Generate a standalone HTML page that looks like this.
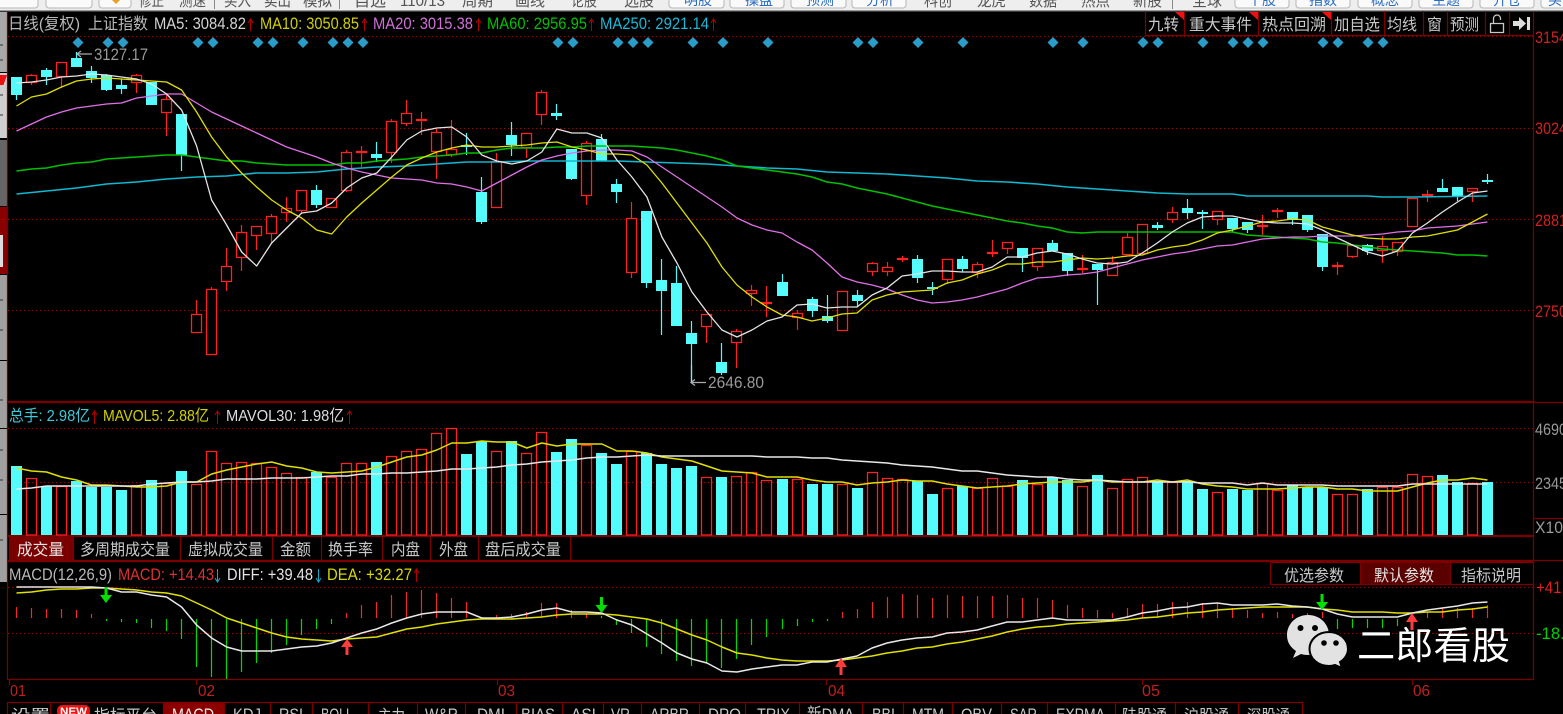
<!DOCTYPE html>
<html><head><meta charset="utf-8"><title>上证指数</title>
<style>
html,body{margin:0;padding:0;background:#000;width:1563px;height:714px;overflow:hidden}
svg{display:block;filter:blur(.3px)}
text{font-family:"Liberation Sans","Noto Sans CJK SC",sans-serif;font-size:16px}
.l{fill:none;vector-effect:non-scaling-stroke;stroke-linejoin:round}
.d{stroke:#a00000;stroke-width:1;stroke-dasharray:1 3;fill:none}
.f{stroke:#7c0000;stroke-width:1.200;fill:none}
.tb{font-size:16px;fill:#c8c8c8}
.top{font-size:16px;fill:#555}
</style></head><body>
<svg width="1563" height="714" viewBox="0 0 1563 714" xmlns="http://www.w3.org/2000/svg">
<rect width="1563" height="714" fill="#000"/>
<!-- top toolbar -->
<rect width="1563" height="10" fill="#eeeeee"/>
<rect y="10" width="1563" height="1" fill="#9a9a9a"/>
<rect y="11" width="1563" height="1" fill="#3a3a3a"/>
<g fill="#fafafa" stroke="#b5b5b5">
<rect x="-4" y="-6" width="42" height="14" rx="3"/><rect x="46" y="-6" width="46" height="14" rx="3"/><rect x="99" y="-6" width="32" height="14" rx="3"/>
<rect x="669" y="-6" width="55" height="14" rx="3"/><rect x="730" y="-6" width="54" height="14" rx="3"/><rect x="791" y="-6" width="55" height="14" rx="3"/><rect x="852" y="-6" width="54" height="14" rx="3"/>
<rect x="1235" y="-6" width="54" height="14" rx="3"/><rect x="1296" y="-6" width="54" height="14" rx="3"/><rect x="1358" y="-6" width="54" height="14" rx="3"/><rect x="1419" y="-6" width="54" height="14" rx="3"/><rect x="1480" y="-6" width="54" height="14" rx="3"/><rect x="1541" y="-6" width="30" height="14" rx="3"/>
</g>
<path d="M112 0l4 4 4-4z" fill="#e8a020"/>
<path d="M214.5 0V9M339.5 0V9M1172.5 0V9" stroke="#888"/>
<g class="top">
<text x="139" y="6" textLength="25" lengthAdjust="spacingAndGlyphs" class="top">修正</text>
<text x="179" y="6" textLength="27" lengthAdjust="spacingAndGlyphs" class="top">测速</text>
<text x="224" y="6" textLength="27" lengthAdjust="spacingAndGlyphs" class="top">买入</text>
<text x="264" y="6" textLength="27" lengthAdjust="spacingAndGlyphs" class="top">卖出</text>
<text x="303" y="6" textLength="29" lengthAdjust="spacingAndGlyphs" class="top">模拟</text>
<text x="354" y="6" textLength="32" lengthAdjust="spacingAndGlyphs" class="top">自选</text>
<text x="400" y="6" textLength="45" lengthAdjust="spacingAndGlyphs" class="top">110/13</text>
<text x="462" y="6" textLength="31" lengthAdjust="spacingAndGlyphs" class="top">周期</text>
<text x="515" y="6" textLength="30" lengthAdjust="spacingAndGlyphs" class="top">画线</text>
<text x="571" y="6" textLength="26" lengthAdjust="spacingAndGlyphs" class="top">论股</text>
<text x="624" y="6" textLength="30" lengthAdjust="spacingAndGlyphs" class="top">选股</text>
<text x="924" y="6" textLength="28" lengthAdjust="spacingAndGlyphs" class="top">科创</text>
<text x="977" y="6" textLength="29" lengthAdjust="spacingAndGlyphs" class="top">龙虎</text>
<text x="1029" y="6" textLength="28" lengthAdjust="spacingAndGlyphs" class="top">数据</text>
<text x="1081" y="6" textLength="29" lengthAdjust="spacingAndGlyphs" class="top">热点</text>
<text x="1133" y="6" textLength="29" lengthAdjust="spacingAndGlyphs" class="top">新股</text>
<text x="1192" y="6" textLength="30" lengthAdjust="spacingAndGlyphs" class="top">全球</text>
</g>
<g style="fill:#2a6cc0">
<text x="684" y="5" style="font-size:14px;fill:#2a6cc0">明股</text><text x="745" y="5" style="font-size:14px;fill:#2a6cc0">操盘</text><text x="806" y="5" style="font-size:14px;fill:#2a6cc0">预测</text><text x="866" y="5" style="font-size:14px;fill:#2a6cc0">分析</text>
<text x="1248" y="5" style="font-size:14px;fill:#2a6cc0">个股</text><text x="1309" y="5" style="font-size:14px;fill:#2a6cc0">指数</text><text x="1371" y="5" style="font-size:14px;fill:#2a6cc0">概念</text><text x="1432" y="5" style="font-size:14px;fill:#2a6cc0">主题</text><text x="1493" y="5" style="font-size:14px;fill:#2a6cc0">开仓</text><text x="1548" y="5" style="font-size:14px;fill:#2a6cc0">买</text>
</g>
<!-- left strip -->
<rect x="0" y="12" width="7" height="60" fill="#a8a8a8"/>
<rect x="0" y="73" width="7" height="65" fill="#cfcfcf"/>
<path d="M0 75h7l-3.5 10H0z" fill="#ee1010"/>
<rect x="0" y="140" width="7" height="66" fill="#666"/>
<rect x="0" y="207" width="7" height="67" fill="#8b0000"/>
<rect x="0" y="235" width="3" height="32" fill="#ddd"/>
<rect x="0" y="275" width="7" height="85" fill="#a0a0a0"/>
<rect x="0" y="361" width="7" height="67" fill="#a0a0a0"/>
<rect x="0" y="429" width="7" height="85" fill="#a0a0a0"/>
<rect x="0" y="515" width="7" height="67" fill="#a0a0a0"/>
<path d="M0 45h3M0 60h3M0 95h3M0 115h3M0 300h3M0 330h3M0 400h3M0 450h3M0 480h3M0 540h3" stroke="#333"/>
<!-- frame -->
<path class="f" d="M7.500 12V680M1533.500 12V680M8 402.500H1563M8 401.500H1533M8 535.500H1533M8 536.500H1533M8 560.500H1563M8 561.500H1533M8 679.500H1533"/>
<path class="f" d="M196.500 680v5M497.500 680v5M826.500 680v5M1142.500 680v5M1412.500 680v5M9.500 680v5M1533.500 518.500H1563"/>
<!-- dotted grid -->
<path class="d" d="M8 36.500H1533M8 128.500H1533M8 219.500H1533M8 310.500H1533M8 428.500H1533M8 482.500H1533M8 587.500H1533M8 633.500H1533"/>
<!-- axis labels -->
<g>
<text x="1535" y="43" textLength="32" lengthAdjust="spacingAndGlyphs" style="font-size:17px;fill:#d02020">3154</text>
<text x="1535" y="134" textLength="32" lengthAdjust="spacingAndGlyphs" style="font-size:17px;fill:#d02020">3024</text>
<text x="1535" y="226" textLength="32" lengthAdjust="spacingAndGlyphs" style="font-size:17px;fill:#d02020">2881</text>
<text x="1535" y="317" textLength="32" lengthAdjust="spacingAndGlyphs" style="font-size:17px;fill:#d02020">2750</text>
<text x="1535" y="435" textLength="32" lengthAdjust="spacingAndGlyphs" style="font-size:17px;fill:#999">4690</text>
<text x="1535" y="489" textLength="32" lengthAdjust="spacingAndGlyphs" style="font-size:17px;fill:#999">2345</text>
<text x="1535" y="533" textLength="28" lengthAdjust="spacingAndGlyphs" style="font-size:17px;fill:#999">X10</text>
<text x="1536" y="593" textLength="38" lengthAdjust="spacingAndGlyphs" style="font-size:17px;fill:#e02020">+41.9</text>
<text x="1536" y="639" textLength="38" lengthAdjust="spacingAndGlyphs" style="font-size:17px;fill:#00d000">-18.5</text>
</g>
<g>
<text x="10" y="696" textLength="16" lengthAdjust="spacingAndGlyphs" style="font-size:16px;fill:#c02020">01</text>
<text x="198" y="696" textLength="17" lengthAdjust="spacingAndGlyphs" style="font-size:16px;fill:#c02020">02</text>
<text x="498" y="696" textLength="17" lengthAdjust="spacingAndGlyphs" style="font-size:16px;fill:#c02020">03</text>
<text x="828" y="696" textLength="17" lengthAdjust="spacingAndGlyphs" style="font-size:16px;fill:#c02020">04</text>
<text x="1142" y="696" textLength="18" lengthAdjust="spacingAndGlyphs" style="font-size:16px;fill:#c02020">05</text>
<text x="1413" y="696" textLength="17" lengthAdjust="spacingAndGlyphs" style="font-size:16px;fill:#c02020">06</text>
</g>
<!-- header text main -->
<text x="8" y="29" textLength="72" lengthAdjust="spacingAndGlyphs" style="font-size:16px;fill:#b8b8b8">日线(复权)</text>
<text x="88" y="29" textLength="60" lengthAdjust="spacingAndGlyphs" style="font-size:16px;fill:#b8b8b8">上证指数</text>
<text x="154" y="29" textLength="92" lengthAdjust="spacingAndGlyphs" style="font-size:17px;fill:#d4d4d4">MA5: 3084.82</text>
<text x="260" y="29" textLength="99" lengthAdjust="spacingAndGlyphs" style="font-size:17px;fill:#d0d000">MA10: 3050.85</text>
<text x="373" y="29" textLength="100" lengthAdjust="spacingAndGlyphs" style="font-size:17px;fill:#d070d8">MA20: 3015.38</text>
<text x="487" y="29" textLength="100" lengthAdjust="spacingAndGlyphs" style="font-size:17px;fill:#00c000">MA60: 2956.95</text>
<text x="600" y="29" textLength="109" lengthAdjust="spacingAndGlyphs" style="font-size:17px;fill:#18b8d8">MA250: 2921.14</text>
<path d="M250.500 31V19M248 23l2.500-4 2.500 4M364.500 31V19M362 23l2.500-4 2.500 4M478.500 31V19M476 23l2.500-4 2.500 4M591.500 31V19M589 23l2.500-4 2.500 4M713.500 31V19M711 23l2.500-4 2.500 4" stroke="#b00000" fill="none"/>
<!-- right top buttons -->
<path class="f" d="M1145.500 11V35.500H1533M1184.500 11V35M1258.500 11V35M1331.500 11V35M1384.500 11V35M1423.500 11V35M1447.500 11V35M1485.500 11V35M1509.500 11V35"/>
<path d="M1175 12h9v8zM1249 12h9v8zM1322 12h9v8z" fill="#f01010"/>
<text x="1148" y="30" textLength="31" lengthAdjust="spacingAndGlyphs" class="tb">九转</text>
<text x="1189" y="30" textLength="63" lengthAdjust="spacingAndGlyphs" class="tb">重大事件</text>
<text x="1262" y="30" textLength="64" lengthAdjust="spacingAndGlyphs" class="tb">热点回溯</text>
<text x="1334" y="30" textLength="46" lengthAdjust="spacingAndGlyphs" class="tb">加自选</text>
<text x="1387" y="30" textLength="30" lengthAdjust="spacingAndGlyphs" class="tb">均线</text>
<text x="1427" y="30" textLength="15" lengthAdjust="spacingAndGlyphs" class="tb">窗</text>
<text x="1450" y="30" textLength="29" lengthAdjust="spacingAndGlyphs" class="tb">预测</text>
<path d="M1490.500 23.500h13v9h-13zM1493.500 23V18.500a3.500 3.500 0 0 1 7 0V20" stroke="#c8c8c8" stroke-width="1.300" fill="none"/>
<path d="M1513 21h6v-4l7 6.500-7 6.500v-4h-6zM1527 17h3v13h-3z" fill="#ddd"/>
<!-- diamonds -->
<path fill="#2a9cc8" d="M78 37l5.500 5.500L78 48l-5.500-5.500zM108 37l5.500 5.500L108 48l-5.500-5.500zM123 37l5.500 5.500L123 48l-5.500-5.500zM198 37l5.500 5.500L198 48l-5.500-5.500zM213 37l5.500 5.500L213 48l-5.500-5.500zM258 37l5.500 5.500L258 48l-5.500-5.500zM273 37l5.500 5.500L273 48l-5.500-5.500zM303 37l5.500 5.500L303 48l-5.500-5.500zM333 37l5.500 5.500L333 48l-5.500-5.500zM348 37l5.500 5.500L348 48l-5.500-5.500zM363 37l5.500 5.500L363 48l-5.500-5.500zM558 37l5.500 5.500L558 48l-5.500-5.500zM573 37l5.500 5.500L573 48l-5.500-5.500zM618 37l5.500 5.500L618 48l-5.500-5.500zM633 37l5.500 5.500L633 48l-5.500-5.500zM648 37l5.500 5.500L648 48l-5.500-5.500zM693 37l5.500 5.500L693 48l-5.500-5.500zM723 37l5.500 5.500L723 48l-5.500-5.500zM768 37l5.500 5.500L768 48l-5.500-5.500zM858 37l5.500 5.500L858 48l-5.500-5.500zM873 37l5.500 5.500L873 48l-5.500-5.500zM918 37l5.500 5.500L918 48l-5.500-5.500zM963 37l5.500 5.500L963 48l-5.500-5.500zM1053 37l5.500 5.500L1053 48l-5.500-5.500zM1083 37l5.500 5.500L1083 48l-5.500-5.500zM1143 37l5.500 5.500L1143 48l-5.500-5.500zM1158 37l5.500 5.500L1158 48l-5.500-5.500zM1203 37l5.500 5.500L1203 48l-5.500-5.500zM1233 37l5.500 5.500L1233 48l-5.500-5.500zM1248 37l5.500 5.500L1248 48l-5.500-5.500zM1263 37l5.500 5.500L1263 48l-5.500-5.500zM1323 37l5.500 5.500L1323 48l-5.500-5.500zM1338 37l5.500 5.500L1338 48l-5.500-5.500zM1368 37l5.500 5.500L1368 48l-5.500-5.500zM1383 37l5.500 5.500L1383 48l-5.500-5.500z"/>
<!-- annotations -->
<path d="M92 54H78M81 51l-4 3 4 3" stroke="#aaa" stroke-width="1.300" fill="none"/>
<text x="94" y="60" textLength="54" lengthAdjust="spacingAndGlyphs" style="font-size:17px;fill:#999">3127.17</text>
<path d="M706 382.500H692M695 379.500l-4 3 4 3M691.500 382V365" stroke="#aaa" stroke-width="1.300" fill="none"/>
<text x="708" y="388" textLength="56" lengthAdjust="spacingAndGlyphs" style="font-size:17px;fill:#999">2646.80</text>
<!-- cyan wicks -->
<path stroke="#54f8f8" stroke-width="1.200" fill="none" d="M16.500 77V100M46.500 68V85M76.500 52V67M91.500 66V83M106.500 74V91M121.500 79V94M181.500 114V171M316.500 185V208M376.500 142V162M466.500 133V155M481.500 177V224M511.500 122V156M556.500 104V120M571.500 149V180M601.500 134V161M616.500 179V203M646.500 211V288M661.500 259V335M676.500 266V326M691.500 321V382M721.500 343V375M782.500 274V296M812.500 297V317M827.500 295V323M857.500 290V307M917.500 255V283M932.500 282V295M962.500 256V272M1022.500 248V272M1052.500 240V251M1067.500 253V276M1097.500 264V305M1157.500 222V230M1187.500 199V219M1202.500 210V229M1232.500 218V232M1247.500 222V233M1292.500 212V225M1307.500 215V232M1322.500 234V271M1367.500 244V255M1442.500 179V192M1457.500 187V201M1487.500 174V184"/>
<!-- cyan bodies -->
<path fill="#54fcfc" d="M11 77h11V95h-11zM41 70h11V77h-11zM71 58h11V67h-11zM86 71h11V78h-11zM101 75h11V90h-11zM116 85h11V89h-11zM146 82h11V105h-11zM176 114h11V155h-11zM311 190h11V205h-11zM371 154h11V158h-11zM461 145h11V147h-11zM476 192h11V222h-11zM506 135h11V145h-11zM551 113h11V116h-11zM566 149h11V179h-11zM596 139h11V161h-11zM611 184h11V192h-11zM641 211h11V283h-11zM656 280h11V291h-11zM671 283h11V326h-11zM686 333h11V344h-11zM716 362h11V373h-11zM777 282h11V296h-11zM807 299h11V311h-11zM822 316h11V321h-11zM852 295h11V301h-11zM912 259h11V278h-11zM927 287h11V289h-11zM957 259h11V269h-11zM1017 248h11V258h-11zM1047 243h11V251h-11zM1062 253h11V271h-11zM1092 264h11V270h-11zM1152 225h11V228h-11zM1182 208h11V213h-11zM1197 212h11V214h-11zM1227 218h11V229h-11zM1242 222h11V230h-11zM1287 212h11V220h-11zM1302 215h11V230h-11zM1317 234h11V267h-11zM1362 245h11V251h-11zM1437 188h11V192h-11zM1452 187h11V196h-11zM1482 180h11V182h-11z"/>
<!-- red wicks -->
<path stroke="#ff2020" stroke-width="1.200" fill="none" d="M31.500 74V85M61.500 62V88M136.500 74V93M166.500 93V136M196.500 300V333M211.500 287V355M226.500 248V291M241.500 225V271M256.500 226V250M271.500 214V243M286.500 197V222M301.500 190V214M331.500 198V208M346.500 150V192M361.500 146V167M391.500 119V163M406.500 100V126M421.500 112V135M436.500 129V179M451.500 120V157M496.500 153V208M526.500 133V158M541.500 90V125M586.500 141V205M631.500 202V278M706.500 314V343M736.500 329V368M751.500 285V306M766.500 286V317M797.500 310V330M842.500 291V331M872.500 262V276M887.500 262V276M902.500 256V262M947.500 259V284M977.500 262V278M992.500 240V257M1007.500 242V254M1037.500 248V271M1082.500 255V273M1112.500 256V276M1127.500 233V255M1142.500 224V254M1172.500 207V223M1217.500 211V225M1262.500 215V235M1277.500 208V218M1337.500 262V275M1352.500 245V258M1382.500 236V263M1397.500 242V256M1412.500 198V227M1427.500 190V202M1472.500 188V202"/>
<!-- red bodies -->
<path stroke="#ff2020" stroke-width="1.300" fill="#000" d="M26.500 75.500h10V82.500h-10zM56.500 62.500h10V76.500h-10zM131.500 75.500h10V82.500h-10zM161.500 99.500h10V112.500h-10zM191.500 314.500h10V332.500h-10zM206.500 289.500h10V354.500h-10zM221.500 266.500h10V281.500h-10zM236.500 232.500h10V257.500h-10zM251.500 226.500h10V235.500h-10zM266.500 216.500h10V233.500h-10zM281.500 208.500h10V212.500h-10zM296.500 190.500h10V210.500h-10zM326.500 198.500h10V207.500h-10zM341.500 152.500h10V190.500h-10zM356.500 151.500h10V152.500h-10zM386.500 121.500h10V152.500h-10zM401.500 113.500h10V123.500h-10zM416.500 119.500h10V120.500h-10zM431.500 132.500h10V151.500h-10zM446.500 149.500h10V154.500h-10zM491.500 161.500h10V207.500h-10zM521.500 133.500h10V147.500h-10zM536.500 92.500h10V114.500h-10zM581.500 143.500h10V195.500h-10zM626.500 218.500h10V272.500h-10zM701.500 314.500h10V326.500h-10zM731.500 331.500h10V342.500h-10zM746.500 290.500h10V293.500h-10zM761.500 302.500h10V303.500h-10zM792.500 313.500h10V317.500h-10zM837.500 291.500h10V330.500h-10zM867.500 263.500h10V271.500h-10zM882.500 267.500h10V271.500h-10zM897.500 258.500h10V259.500h-10zM942.500 259.500h10V279.500h-10zM972.500 264.500h10V272.500h-10zM987.500 252.500h10V253.500h-10zM1002.500 242.500h10V248.500h-10zM1032.500 248.500h10V266.500h-10zM1077.500 268.500h10V269.500h-10zM1107.500 262.500h10V275.500h-10zM1122.500 237.500h10V254.500h-10zM1137.500 224.500h10V253.500h-10zM1167.500 212.500h10V219.500h-10zM1212.500 211.500h10V219.500h-10zM1257.500 225.500h10V226.500h-10zM1272.500 210.500h10V211.500h-10zM1332.500 265.500h10V266.500h-10zM1347.500 245.500h10V256.500h-10zM1377.500 246.500h10V250.500h-10zM1392.500 242.500h10V251.500h-10zM1407.500 198.500h10V226.500h-10zM1422.500 194.500h10V195.500h-10zM1467.500 188.500h10V191.500h-10z"/>
<!-- MAs -->
<g transform="translate(16.500 0) scale(15.01 1)">
<polyline class="l" stroke="#10b8d0" stroke-width="1.600" points="0,194 2,191 4,188 6,184 8,182 10,179 12,177 14,176 16,173 18,173 20,172 22,169 24,167 26,166 28,164 30,162 32,162 34,161 36,161 38,161 40,161 42,162 44,163 46,164 48,166 50,168 52,169 54,172 56,173 58,174 60,176 62,178 64,181 66,182 68,184 70,187 72,189 74,191 76,193 78,194 81,194 82,196 90,196 91,197 93,197 98,196"/>
<polyline class="l" stroke="#00c000" stroke-width="1.600" points="0,171 1,169 2,168 3,165 4,163 5,162 6,159 7,158 8,157 9,156 10,155 11,155 12,157 13,159 14,161 15,161 16,163 17,164 18,165 19,165 20,165 21,165 22,163 23,163 24,161 25,160 26,159 27,157 28,156 29,155 30,153 31,153 32,150 33,148 34,148 35,148 36,147 37,147 38,146 39,146 40,146 41,146 42,147 43,148 44,150 45,153 46,156 47,160 48,166 49,168 50,170 51,172 52,174 53,177 54,182 55,184 56,188 57,191 58,194 59,198 60,202 61,206 62,209 63,212 64,215 65,218 66,221 67,223 68,226 69,228 70,232 71,233 72,232 73,232 74,232 75,232 76,232 77,232 78,232 79,232 80,232 81,232 82,235 83,236 84,237 85,238 86,239 87,242 88,243 89,245 90,247 91,249 92,250 93,251 94,252 95,253 96,255 97,255 98,256"/>
<polyline class="l" stroke="#e070e8" stroke-width="1.300" points="0,131 1,124 2,117 3,112 4,108 5,106 6,104 7,103 8,98 9,96 10,94 11,94 12,103 13,112 14,119 15,126 16,133 17,140 18,147 19,152 20,157 21,163 22,168 23,172 24,175 25,178 26,179 27,180 28,183 29,184 30,187 31,191 32,183 33,175 34,167 35,160 36,156 37,153 38,151 39,150 40,150 41,151 42,157 43,167 44,177 45,187 46,197 47,207 48,218 49,225 50,230 51,233 52,242 53,250 54,263 55,277 56,282 57,285 58,289 59,295 60,300 61,303 62,302 63,300 64,297 65,293 66,289 67,283 68,278 69,277 70,275 71,274 72,272 73,268 74,264 75,260 76,257 77,254 78,252 79,249 80,246 81,245 82,242 83,239 84,238 85,237 86,237 87,236 88,236 89,236 90,235 91,234 92,232 93,231 94,228 95,227 96,226 97,224 98,222"/>
<polyline class="l" stroke="#e0e000" stroke-width="1.300" points="0,106 1,97 2,94 3,87 4,81 5,79 6,78 7,79 8,80 9,81 10,82 11,90 12,112 13,137 14,157 15,173 16,187 17,200 18,210 19,218 20,230 21,234 22,217 23,203 24,190 25,177 26,165 27,158 28,152 29,148 30,145 31,147 32,147 33,146 34,145 35,143 36,142 37,147 38,150 39,154 40,154 41,155 42,165 43,183 44,203 45,223 46,243 47,267 48,285 49,297 50,307 51,315 52,317 53,321 54,318 55,314 56,313 57,300 58,295 59,292 60,291 61,290 62,283 63,280 64,274 65,270 66,264 67,264 68,262 69,262 70,260 71,258 72,259 73,258 74,256 75,255 76,250 77,247 78,245 79,240 80,233 81,230 82,226 83,222 84,221 85,219 86,220 87,227 88,231 89,235 90,238 91,239 92,239 93,237 94,236 95,233 96,230 97,222 98,214"/>
<polyline class="l" stroke="#e4e4e4" stroke-width="1.300" points="0,83 1,82 2,80 3,77 4,76 5,74 6,75 7,77 8,79 9,84 10,94 11,110 12,146 13,200 14,225 15,252 16,266 17,243 18,228 19,213 20,211 21,203 22,188 23,178 24,173 25,157 26,140 27,131 28,128 29,127 30,137 31,155 32,161 33,164 34,161 35,152 36,129 37,133 38,133 39,138 40,160 41,177 42,197 43,237 44,263 45,292 46,312 47,330 48,337 49,330 50,321 51,317 52,305 53,304 54,308 55,307 56,307 57,295 58,288 59,276 60,274 61,271 62,271 63,272 64,272 65,267 66,257 67,257 68,253 69,251 70,254 71,259 72,263 73,264 74,262 75,253 76,243 77,232 78,223 79,217 80,216 81,216 82,219 83,222 84,223 85,223 86,224 87,230 88,238 89,245 90,252 91,256 92,251 93,233 94,223 95,212 96,202 97,193 98,191"/>
</g>
<!-- Volume header -->
<text x="9" y="421" textLength="81" lengthAdjust="spacingAndGlyphs" style="font-size:16px;fill:#40c8d8">总手: 2.98亿</text>
<text x="103" y="421" textLength="106" lengthAdjust="spacingAndGlyphs" style="font-size:16px;fill:#d0d000">MAVOL5: 2.88亿</text>
<text x="226" y="421" textLength="118" lengthAdjust="spacingAndGlyphs" style="font-size:16px;fill:#dddddd">MAVOL30: 1.98亿</text>
<path d="M94.500 424V411M92 415l2.500-4 2.500 4M217.500 424V411M215 415l2.500-4 2.500 4M349.500 424V411M347 415l2.500-4 2.500 4" stroke="#b00000" fill="none"/>
<!-- Volume bars -->
<path fill="#54fcfc" d="M11 466h11V535h-11zM41 486h11V535h-11zM71 481h11V535h-11zM86 487h11V535h-11zM101 487h11V535h-11zM116 490h11V535h-11zM146 480h11V535h-11zM176 471h11V535h-11zM311 472h11V535h-11zM371 462h11V535h-11zM461 454h11V535h-11zM476 441h11V535h-11zM506 441h11V535h-11zM551 452h11V535h-11zM566 439h11V535h-11zM596 453h11V535h-11zM611 464h11V535h-11zM641 453h11V535h-11zM656 464h11V535h-11zM671 468h11V535h-11zM686 466h11V535h-11zM716 477h11V535h-11zM777 479h11V535h-11zM807 484h11V535h-11zM822 484h11V535h-11zM852 488h11V535h-11zM912 481h11V535h-11zM927 494h11V535h-11zM957 486h11V535h-11zM1017 480h11V535h-11zM1047 477h11V535h-11zM1062 480h11V535h-11zM1092 475h11V535h-11zM1152 481h11V535h-11zM1182 481h11V535h-11zM1197 489h11V535h-11zM1227 489h11V535h-11zM1242 490h11V535h-11zM1287 485h11V535h-11zM1302 487h11V535h-11zM1317 487h11V535h-11zM1362 489h11V535h-11zM1437 475h11V535h-11zM1452 482h11V535h-11zM1482 482h11V535h-11z"/>
<path fill="none" stroke="#ff2020" stroke-width="1.300" d="M26.500 478.500h10V535h-10zM56.500 486.500h10V535h-10zM131.500 485.500h10V535h-10zM161.500 483.500h10V535h-10zM191.500 484.500h10V535h-10zM206.500 451.500h10V535h-10zM221.500 463.500h10V535h-10zM236.500 462.500h10V535h-10zM251.500 463.500h10V535h-10zM266.500 467.500h10V535h-10zM281.500 473.500h10V535h-10zM296.500 477.500h10V535h-10zM326.500 477.500h10V535h-10zM341.500 463.500h10V535h-10zM356.500 463.500h10V535h-10zM386.500 456.500h10V535h-10zM401.500 451.500h10V535h-10zM416.500 449.500h10V535h-10zM431.500 433.500h10V535h-10zM446.500 428.500h10V535h-10zM491.500 451.500h10V535h-10zM521.500 453.500h10V535h-10zM536.500 432.500h10V535h-10zM581.500 445.500h10V535h-10zM626.500 451.500h10V535h-10zM701.500 477.500h10V535h-10zM731.500 476.500h10V535h-10zM746.500 472.500h10V535h-10zM761.500 480.500h10V535h-10zM792.500 479.500h10V535h-10zM837.500 484.500h10V535h-10zM867.500 472.500h10V535h-10zM882.500 478.500h10V535h-10zM897.500 479.500h10V535h-10zM942.500 488.500h10V535h-10zM972.500 488.500h10V535h-10zM987.500 478.500h10V535h-10zM1002.500 486.500h10V535h-10zM1032.500 484.500h10V535h-10zM1077.500 486.500h10V535h-10zM1107.500 488.500h10V535h-10zM1122.500 479.500h10V535h-10zM1137.500 477.500h10V535h-10zM1167.500 482.500h10V535h-10zM1212.500 492.500h10V535h-10zM1257.500 483.500h10V535h-10zM1272.500 490.500h10V535h-10zM1332.500 494.500h10V535h-10zM1347.500 494.500h10V535h-10zM1377.500 487.500h10V535h-10zM1392.500 487.500h10V535h-10zM1407.500 474.500h10V535h-10zM1422.500 476.500h10V535h-10zM1467.500 483.500h10V535h-10z"/>
<g transform="translate(16.500 0) scale(15.01 1)">
<polyline class="l" stroke="#e0e000" stroke-width="1.500" points="0,468 1,471 2,472 3,477 4,480 5,485 6,485 7,486 8,487 9,487 10,486 11,482 12,482 13,474 14,470 15,467 16,464 17,462 18,466 19,468 20,472 21,473 22,472 23,471 24,467 25,462 26,457 27,455 28,450 29,443 30,443 31,441 32,442 33,442 34,448 35,443 36,446 37,444 38,444 39,444 40,451 41,451 42,453 43,457 44,459 45,461 46,466 47,471 48,472 49,473 50,477 51,477 52,477 53,480 54,482 55,482 56,485 57,483 58,482 59,480 60,481 61,481 62,484 63,486 64,488 65,487 66,486 67,484 68,483 69,482 70,482 71,482 72,480 73,482 74,482 75,482 76,480 77,482 78,480 79,484 80,486 81,487 82,489 83,489 84,489 85,488 86,487 87,487 88,489 89,489 90,491 91,491 92,491 93,487 94,483 95,480 96,480 97,478 98,480"/>
<polyline class="l" stroke="#e8e8e8" stroke-width="1.500" points="0,489 1,488 2,486 3,486 4,486 5,486 6,486 7,486 8,486 9,484 10,483 11,482 12,482 13,481 14,479 15,479 16,479 17,478 18,478 19,478 20,477 21,476 22,476 23,474 24,474 25,473 26,473 27,472 28,471 29,469 30,469 31,468 32,467 33,465 34,464 35,462 36,461 37,460 38,458 39,457 40,457 41,456 42,455 43,456 44,456 45,456 46,456 47,456 48,456 49,456 50,457 51,457 52,457 53,458 54,458 55,460 56,461 57,462 58,463 59,465 60,466 61,467 62,469 63,471 64,471 65,473 66,475 67,476 68,477 69,477 70,479 71,480 72,480 73,481 74,482 75,482 76,482 77,482 78,482 79,483 80,483 81,483 82,485 83,483 84,485 85,485 86,485 87,485 88,486 89,486 90,486 91,486 92,486 93,484 94,484 95,484 96,484 97,484 98,484"/>
</g>
<!-- Volume tabs -->
<rect x="9" y="537" width="64" height="23" fill="#7a0000"/>
<path class="f" d="M73.500 537V560M180.500 537V560M272.500 537V560M321.500 537V560M382.500 537V560M430.500 537V560M478.500 537V560M570.500 537V560"/>
<text x="17" y="555" textLength="47" lengthAdjust="spacingAndGlyphs" style="font-size:16px;fill:#e8e8e8">成交量</text>
<text x="80" y="555" textLength="90" lengthAdjust="spacingAndGlyphs" class="tb">多周期成交量</text>
<text x="188" y="555" textLength="75" lengthAdjust="spacingAndGlyphs" class="tb">虚拟成交量</text>
<text x="280" y="555" textLength="31" lengthAdjust="spacingAndGlyphs" class="tb">金额</text>
<text x="328" y="555" textLength="45" lengthAdjust="spacingAndGlyphs" class="tb">换手率</text>
<text x="391" y="555" textLength="29" lengthAdjust="spacingAndGlyphs" class="tb">内盘</text>
<text x="439" y="555" textLength="29" lengthAdjust="spacingAndGlyphs" class="tb">外盘</text>
<text x="485" y="555" textLength="76" lengthAdjust="spacingAndGlyphs" class="tb">盘后成交量</text>
<!-- MACD header -->
<text x="9" y="580" textLength="103" lengthAdjust="spacingAndGlyphs" style="font-size:16.500px;fill:#b8b8b8">MACD(12,26,9)</text>
<text x="118" y="580" textLength="96" lengthAdjust="spacingAndGlyphs" style="font-size:16.500px;fill:#e03030">MACD: +14.43</text>
<text x="227" y="580" textLength="86" lengthAdjust="spacingAndGlyphs" style="font-size:16.500px;fill:#e4e4e4">DIFF: +39.48</text>
<text x="327" y="580" textLength="85" lengthAdjust="spacingAndGlyphs" style="font-size:16.500px;fill:#d8d800">DEA: +32.27</text>
<path d="M217.500 569V582M215 578l2.500 4 2.500-4M318.500 569V582M316 578l2.500 4 2.500-4" stroke="#18a8c8" fill="none"/>
<path d="M416.500 582V569M414 573l2.500-4 2.500 4" stroke="#b00000" fill="none"/>
<!-- MACD right tabs -->
<rect x="1361" y="562" width="90" height="22" fill="#5a0000"/>
<path class="f" d="M1270.500 562.500V584.500H1533M1270.500 562.500H1533M1360.500 562V584M1450.500 562V584"/>
<text x="1284" y="581" textLength="60" lengthAdjust="spacingAndGlyphs" class="tb">优选参数</text>
<text x="1374" y="581" textLength="60" lengthAdjust="spacingAndGlyphs" style="font-size:16px;fill:#e4e4e4">默认参数</text>
<text x="1461" y="581" textLength="60" lengthAdjust="spacingAndGlyphs" class="tb">指标说明</text>
<!-- MACD bars -->
<path stroke="#f02828" stroke-width="1.200" fill="none" d="M16.500 618V607M31.500 618V608M46.500 618V609M61.500 618V609M76.500 618V610M91.500 618V614M346.500 618V613M361.500 618V605M376.500 618V602M391.500 618V595M406.500 618V592M421.500 618V590M436.500 618V593M451.500 618V598M466.500 618V602M481.500 618V617M496.500 618V615M511.500 618V614M526.500 618V612M541.500 618V603M556.500 618V603M571.500 618V610M586.500 618V613M842.500 618V612M857.500 618V609M872.500 618V602M887.500 618V597M902.500 618V594M917.500 618V595M932.500 618V598M947.500 618V595M962.500 618V596M977.500 618V596M992.500 618V596M1007.500 618V595M1022.500 618V598M1037.500 618V598M1052.500 618V600M1067.500 618V605M1082.500 618V608M1097.500 618V610M1112.500 618V613M1127.500 618V608M1142.500 618V604M1157.500 618V604M1172.500 618V602M1187.500 618V602M1202.500 618V603M1217.500 618V604M1232.500 618V608M1247.500 618V610M1262.500 618V613M1277.500 618V612M1292.500 618V614M1307.500 618V613M1322.500 618V612M1412.500 618V612M1427.500 618V612M1442.500 618V608M1457.500 618V608M1472.500 618V608M1487.500 618V605"/>
<path stroke="#00d800" stroke-width="1.200" fill="none" d="M106.500 619V621M121.500 619V622M136.500 619V623M151.500 619V628M166.500 619V631M181.500 619V639M196.500 619V667M211.500 619V677M226.500 619V679M241.500 619V672M256.500 619V663M271.500 619V653M286.500 619V645M301.500 619V635M316.500 619V629M331.500 619V624M601.500 616V618M616.500 619V625M631.500 619V633M646.500 619V647M661.500 619V654M676.500 619V661M691.500 619V666M706.500 619V663M721.500 619V668M736.500 619V659M751.500 619V645M766.500 619V637M782.500 619V629M797.500 619V626M812.500 619V622M827.500 619V621M1337.500 619V629M1352.500 619V628M1367.500 619V628M1382.500 619V628M1397.500 619V626"/>
<g transform="translate(16.500 0) scale(15.01 1)">
<polyline class="l" stroke="#e0e000" stroke-width="1.500" points="0,593 1,592 2,590 3,589 4,589 5,588 6,588 7,589 8,590 9,592 10,593 11,596 12,603 13,610 14,618 15,623 16,628 17,633 18,637 19,639 20,640 21,641 22,639 23,638 24,637 25,633 26,629 27,627 28,624 29,622 30,620 31,619 32,619 33,619 34,618 35,617 36,615 37,614 38,614 39,614 40,615 41,617 42,619 43,623 44,629 45,635 46,640 47,647 48,653 49,655 50,658 51,660 52,661 53,661 54,661 55,660 56,658 57,656 58,653 59,651 60,648 61,647 62,644 63,642 64,639 65,636 66,632 67,629 68,627 69,626 70,624 71,623 72,622 73,621 74,620 75,618 76,617 77,615 78,613 79,612 80,610 81,609 82,608 83,607 84,607 85,607 86,607 87,609 88,610 89,612 90,612 91,612 92,613 93,613 94,612 95,612 96,610 97,609 98,607"/>
<polyline class="l" stroke="#e8e8e8" stroke-width="1.500" points="0,587 1,587 2,587 3,587 4,587 5,587 6,588 7,592 8,592 9,595 10,597 11,607 12,625 13,638 14,647 15,651 16,651 17,651 18,649 19,647 20,646 21,643 22,638 23,633 24,629 25,623 26,618 27,614 28,612 29,612 30,612 31,618 32,618 33,617 34,614 35,610 36,608 37,612 38,612 39,613 40,620 41,625 42,634 43,643 44,653 45,659 46,663 47,671 48,672 49,669 50,667 51,665 52,665 53,662 54,662 55,659 56,656 57,648 58,643 59,640 60,638 61,637 62,633 63,632 64,630 65,626 66,622 67,622 68,620 69,618 70,620 71,620 72,620 73,620 74,617 75,613 76,611 77,608 78,607 79,604 80,603 81,605 82,605 83,605 84,604 85,606 86,607 87,609 88,614 89,617 90,617 91,617 92,617 93,613 94,610 95,608 96,606 97,603 98,602"/>
</g>
<!-- MACD signals -->
<path fill="#00e000" d="M104.500 587h3v8h4.500L106 603l-6-8h4.500zM600 597h3v8h4.500L601.500 613l-6-8h4.500zM1320.500 594h3v8h4.500L1322 610l-6-8h4.500z"/>
<path fill="#ff3c3c" d="M345.500 655h3v-8h4.500L347 639l-6 8h4.500zM839.500 675h3v-8h4.500L841 658l-6 9h4.500zM1410.500 630h3v-8h4.500L1412 613l-6 9h4.500z"/>
<!-- bottom tabs -->
<rect x="164" y="702" width="60" height="12" fill="#8b0000"/>
<rect x="57" y="705" width="33" height="12" rx="5" fill="#ee1111"/>
<path class="f" d="M7.500 714V702.500H1302.500V714M50.500 702V714M163.500 702V714M224.500 702V714M270.500 702V714M312.500 702V714M368.500 702V714M417.500 702V714M465.500 702V714M516.500 702V714M562.500 702V714M603.500 702V714M641.500 702V714M699.500 702V714M745.500 702V714M799.500 702V714M862.500 702V714M903.500 702V714M952.500 702V714M1001.500 702V714M1047.500 702V714M1115.500 702V714M1175.500 702V714M1238.500 702V714"/>
<text x="11" y="721" textLength="39" lengthAdjust="spacingAndGlyphs" class="tb">设置</text>
<text x="60" y="715" textLength="27" lengthAdjust="spacingAndGlyphs" style="font-size:11px;fill:#fff;font-weight:bold">NEW</text>
<text x="94" y="721" textLength="63" lengthAdjust="spacingAndGlyphs" class="tb">指标平台</text>
<text x="172" y="720" textLength="42" lengthAdjust="spacingAndGlyphs" style="font-size:17px;fill:#eee">MACD</text>
<text x="233" y="720" textLength="28" lengthAdjust="spacingAndGlyphs" style="font-size:17px;fill:#c8c8c8">KDJ</text>
<text x="279" y="720" textLength="24" lengthAdjust="spacingAndGlyphs" style="font-size:17px;fill:#c8c8c8">RSI</text>
<text x="321" y="720" textLength="32" lengthAdjust="spacingAndGlyphs" style="font-size:17px;fill:#c8c8c8">BOLL</text>
<text x="378" y="721" textLength="27" lengthAdjust="spacingAndGlyphs" class="tb">主力</text>
<text x="425" y="720" textLength="33" lengthAdjust="spacingAndGlyphs" style="font-size:17px;fill:#c8c8c8">W&amp;R</text>
<text x="477" y="720" textLength="28" lengthAdjust="spacingAndGlyphs" style="font-size:17px;fill:#c8c8c8">DMI</text>
<text x="521" y="720" textLength="34" lengthAdjust="spacingAndGlyphs" style="font-size:17px;fill:#c8c8c8">BIAS</text>
<text x="571" y="720" textLength="25" lengthAdjust="spacingAndGlyphs" style="font-size:17px;fill:#c8c8c8">ASI</text>
<text x="611" y="720" textLength="19" lengthAdjust="spacingAndGlyphs" style="font-size:17px;fill:#c8c8c8">VR</text>
<text x="650" y="720" textLength="39" lengthAdjust="spacingAndGlyphs" style="font-size:17px;fill:#c8c8c8">ARBR</text>
<text x="708" y="720" textLength="33" lengthAdjust="spacingAndGlyphs" style="font-size:17px;fill:#c8c8c8">DPO</text>
<text x="757" y="720" textLength="33" lengthAdjust="spacingAndGlyphs" style="font-size:17px;fill:#c8c8c8">TRIX</text>
<text x="807" y="720" textLength="47" lengthAdjust="spacingAndGlyphs" style="font-size:17px;fill:#c8c8c8">新DMA</text>
<text x="872" y="720" textLength="23" lengthAdjust="spacingAndGlyphs" style="font-size:17px;fill:#c8c8c8">BBI</text>
<text x="912" y="720" textLength="32" lengthAdjust="spacingAndGlyphs" style="font-size:17px;fill:#c8c8c8">MTM</text>
<text x="961" y="720" textLength="31" lengthAdjust="spacingAndGlyphs" style="font-size:17px;fill:#c8c8c8">OBV</text>
<text x="1010" y="720" textLength="27" lengthAdjust="spacingAndGlyphs" style="font-size:17px;fill:#c8c8c8">SAR</text>
<text x="1056" y="720" textLength="49" lengthAdjust="spacingAndGlyphs" style="font-size:17px;fill:#c8c8c8">EXPMA</text>
<text x="1122" y="721" textLength="45" lengthAdjust="spacingAndGlyphs" class="tb">陆股通</text>
<text x="1184" y="721" textLength="45" lengthAdjust="spacingAndGlyphs" class="tb">沪股通</text>
<text x="1247" y="721" textLength="43" lengthAdjust="spacingAndGlyphs" class="tb">深股通</text>
<!-- watermark -->
<path fill="#e2e2e2" d="M1308 615c-12 0-21 9-21 20 0 7 3 12 9 16l-3 7 8-4c2 .5 4 1 7 1 12 0 21-9 21-20s-9-20-21-20z"/>
<path fill="#e2e2e2" stroke="#000" stroke-width="2" d="M1329 632c-11 0-19.500 7.500-19.500 17s8.500 17 19.500 17c2 0 4-.3 6-1l7 3-2-6c5-3 8-8 8-13 0-9.500-8.500-17-19-17z"/>
<circle cx="1300.500" cy="628" r="3" fill="#000"/><circle cx="1315" cy="628" r="3" fill="#000"/>
<circle cx="1324" cy="643" r="2.800" fill="#000"/><circle cx="1336" cy="643" r="2.800" fill="#000"/>
<text x="1357" y="659" textLength="153" lengthAdjust="spacingAndGlyphs" style="font-size:38px;fill:#fff">二郎看股</text>
</svg>
</body></html>
